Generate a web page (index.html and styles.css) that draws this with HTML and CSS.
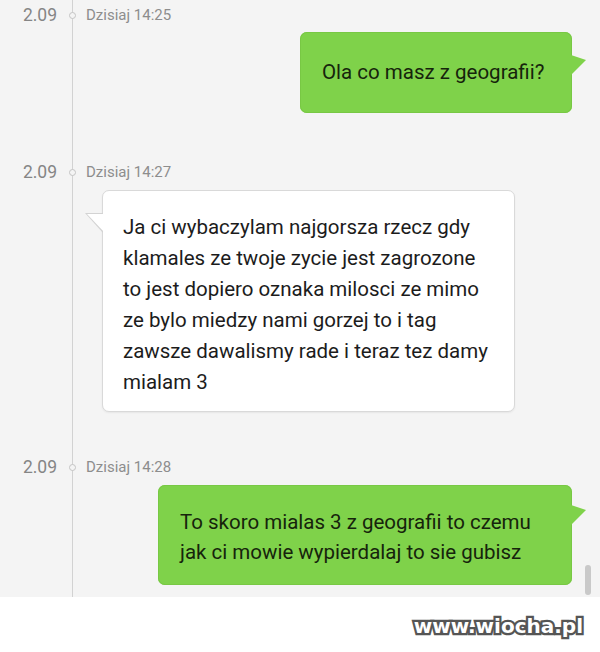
FILE: index.html
```html
<!DOCTYPE html>
<html lang="pl">
<head>
<meta charset="utf-8">
<title>Czat</title>
<link rel="stylesheet" href="styles.css">
</head>
<body>
<div class="chat">
  <div class="group first">
    <div class="stamp"><span class="date">2.09</span><span class="dot"></span><span class="time">Dzisiaj 14:25</span></div>
    <div class="row right">
      <div class="bubble green b1">Ola co masz z geografii?</div>
    </div>
  </div>
  <div class="group second">
    <div class="stamp"><span class="date">2.09</span><span class="dot"></span><span class="time">Dzisiaj 14:27</span></div>
    <div class="row left">
      <div class="bubble white b2">Ja ci wybaczylam najgorsza rzecz gdy<br>klamales ze twoje zycie jest zagrozone<br>to jest dopiero oznaka milosci ze mimo<br>ze bylo miedzy nami gorzej to i tag<br>zawsze dawalismy rade i teraz tez damy<br>mialam 3</div>
    </div>
  </div>
  <div class="group third">
    <div class="stamp"><span class="date">2.09</span><span class="dot"></span><span class="time">Dzisiaj 14:28</span></div>
    <div class="row right">
      <div class="bubble green b3">To skoro mialas 3 z geografii to czemu<br>jak ci mowie wypierdalaj to sie gubisz</div>
    </div>
  </div>
  <div class="scrollbar"></div>
</div>
<div class="footer">
  <span class="watermark">www.wiocha.pl</span>
</div>
</body>
</html>
```

FILE: styles.css
```css
html, body {
  margin: 0;
  padding: 0;
  background: #ffffff;
}

body {
  width: 600px;
  height: 652px;
  overflow: hidden;
  font-family: Roboto, "Noto Sans", "Liberation Sans", sans-serif;
}

.chat {
  position: relative;
  height: 597px;
  box-sizing: border-box;
  padding-top: 6px;
  background-color: #f4f4f4;
  background-image: linear-gradient(#d2d2d2, #d2d2d2);
  background-size: 1px 100%;
  background-position: 72px 0;
  background-repeat: no-repeat;
}

.group.second { margin-top: 50px; }
.group.third { margin-top: 46px; }

.stamp {
  display: flex;
  align-items: center;
  height: 18px;
  color: #8a8a8a;
}

.date {
  width: 57px;
  text-align: right;
  font-size: 17.5px;
  color: #858585;
}

.dot {
  width: 5px;
  height: 5px;
  border: 1px solid #c4c4c4;
  border-radius: 50%;
  background: #f4f4f4;
  margin-left: 12px;
  margin-right: 10px;
}

.time {
  font-size: 15px;
  color: #8d8d8d;
}

.row {
  display: flex;
  margin-top: 8px;
}
.row.right { justify-content: flex-end; padding-right: 28px; }
.row.left { justify-content: flex-start; padding-left: 102px; }

.bubble {
  position: relative;
  border-radius: 7px;
  font-size: 20.5px;
  line-height: 31px;
  box-sizing: border-box;
}

.bubble.green {
  background: #7fd24a;
  color: #16240c;
  box-shadow: inset 0 0 0 1px #78c844;
}

.bubble.white {
  background: #ffffff;
  color: #1c1c1c;
  border: 1px solid #d9d9d9;
  box-shadow: 0 1px 2px rgba(0,0,0,0.06);
}

.b1 {
  width: 272px;
  height: 81px;
  padding: 25px 0 0 22px;
  line-height: 30px;
}

.b2 {
  width: 413px;
  height: 222px;
  padding: 21px 0 0 20px;
  margin-top: 1px;
}

.b3 {
  width: 414px;
  height: 100px;
  padding: 22px 0 0 22px;
  line-height: 30px;
  margin-top: 1px;
}

.bubble.green::after {
  content: "";
  position: absolute;
  right: -14px;
  top: 23px;
  width: 15px;
  height: 20px;
  background: #7fd24a;
  clip-path: polygon(0 0, 100% 25%, 0 100%);
}

.b3.green::after { top: 20px; }

.bubble.white::before,
.bubble.white::after {
  content: "";
  position: absolute;
  top: 22px;
  width: 18px;
  height: 20px;
  clip-path: polygon(100% 0, 0 0, 100% 100%);
}
.bubble.white::before {
  left: -18px;
  background: #d3d3d3;
}
.bubble.white::after {
  left: -16px;
  top: 23px;
  width: 17px;
  height: 18px;
  background: #ffffff;
}

.scrollbar {
  position: absolute;
  left: 585px;
  top: 565px;
  width: 6px;
  height: 30px;
  border-radius: 3px;
  background: #c9c9c9;
}

.footer {
  height: 55px;
  display: flex;
  justify-content: flex-end;
  align-items: center;
  padding-right: 17px;
  padding-top: 2px;
  box-sizing: border-box;
  background: #ffffff;
}

.watermark {
  font-family: "DejaVu Sans", "Liberation Sans", sans-serif;
  font-weight: bold;
  font-size: 20px;
  letter-spacing: 0;
  color: #ffffff;
  -webkit-text-stroke: 4.5px #555555;
  paint-order: stroke fill;
}
```
